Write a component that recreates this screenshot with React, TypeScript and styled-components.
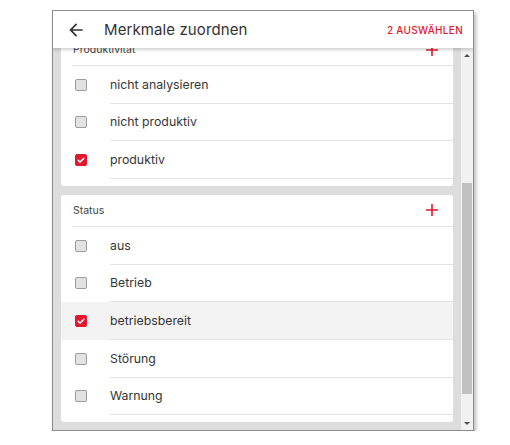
import React, { useLayoutEffect, useRef } from "react";
import styled, { createGlobalStyle } from "styled-components";

const Global = createGlobalStyle`
  html, body { margin: 0; padding: 0; background: #ffffff; }
  body { font-family: "Inter", "Liberation Sans", sans-serif; -webkit-font-smoothing: antialiased; }
  * { box-sizing: border-box; }
`;

const RED = "#e5172f";

const Page = styled.div`
  padding: 10px 0 0 52px;
`;

const Frame = styled.div`
  width: 422px;
  height: 421px;
  border: 1px solid #8d8d8d;
  background: #ffffff;
  box-shadow: 2px 3px 4px rgba(0, 0, 0, 0.28);
  display: flex;
  flex-direction: column;
  overflow: hidden;
`;

const Header = styled.header`
  position: relative;
  z-index: 2;
  height: 37px;
  flex: none;
  display: flex;
  align-items: center;
  padding: 0 10px 0 12px;
  background: #ffffff;
  box-shadow: 0 2px 3px rgba(0, 0, 0, 0.18);
`;

const BackButton = styled.button`
  border: 0;
  background: none;
  padding: 0;
  width: 22px;
  height: 22px;
  display: flex;
  align-items: center;
  justify-content: center;
  color: #333333;
  cursor: pointer;
`;

const Title = styled.h1`
  margin: 0 0 0 17px;
  font-size: 15px;
  font-weight: 400;
  color: #333333;
  flex: 1;
  letter-spacing: 0.1px;
`;

const Action = styled.button`
  border: 0;
  background: none;
  padding: 0;
  color: ${RED};
  font-family: inherit;
  font-size: 10px;
  font-weight: 500;
  letter-spacing: 0.3px;
  text-transform: uppercase;
  cursor: pointer;
`;

const Body = styled.div`
  flex: 1;
  min-height: 0;
  display: flex;
  background: #dddddd;
`;

const Scroller = styled.div`
  flex: 1;
  min-width: 0;
  overflow: hidden;
`;

const List = styled.div`
  padding: 8px 8px 40px 8px;
  display: flex;
  flex-direction: column;
  gap: 9px;
`;

const Card = styled.section`
  background: #ffffff;
  border-radius: 3px;
  padding-bottom: 7px;
  overflow: hidden;
`;

const CardHeader = styled.div`
  height: 32px;
  margin-left: 11px;
  padding: 0 11px 0 1px;
  display: flex;
  align-items: center;
  border-bottom: 1px solid #e4e4e4;
`;

const CardTitle = styled.span`
  flex: 1;
  font-size: 10.5px;
  color: #444444;
`;

const AddButton = styled.button`
  border: 0;
  background: none;
  padding: 0;
  width: 20px;
  height: 20px;
  display: flex;
  align-items: center;
  justify-content: center;
  color: ${RED};
  cursor: pointer;
`;

const Row = styled.label<{ $active?: boolean }>`
  height: 37.66px;
  display: flex;
  align-items: center;
  padding-left: 14px;
  background: ${(p) => (p.$active ? "#f3f3f3" : "transparent")};
  cursor: pointer;
`;

const Box = styled.span<{ $checked?: boolean }>`
  width: 12px;
  height: 12px;
  flex: none;
  border-radius: 2px;
  border: 1px solid ${(p) => (p.$checked ? RED : "#9c9c9c")};
  background: ${(p) => (p.$checked ? RED : "#e2e2e2")};
  display: flex;
  align-items: center;
  justify-content: center;
`;

const LabelCell = styled.span`
  flex: 1;
  align-self: stretch;
  margin-left: 23px;
  display: flex;
  align-items: center;
  border-bottom: 1px solid #e4e4e4;
  font-size: 12.3px;
  color: #353535;
`;

const ScrollBar = styled.div`
  width: 12px;
  flex: none;
  background: #f1f1f1;
  display: flex;
  flex-direction: column;
  align-items: center;
`;

const Arrow = styled.div<{ $down?: boolean }>`
  height: 14px;
  width: 100%;
  flex: none;
  display: flex;
  align-items: center;
  justify-content: center;
  &::after {
    content: "";
    width: 0;
    height: 0;
    border-left: 3.5px solid transparent;
    border-right: 3.5px solid transparent;
    ${(p) =>
      p.$down ? "border-top: 3.5px solid #505050;" : "border-bottom: 3.5px solid #505050;"}
  }
`;

const Track = styled.div`
  flex: 1;
  width: 100%;
  padding: 0 1px;
`;

const Thumb = styled.div<{ $top: number; $height: number }>`
  margin-top: ${(p) => p.$top}px;
  height: ${(p) => p.$height}px;
  background: #c1c1c1;
`;

const ArrowLeftIcon = () => (
  <svg width="20" height="20" viewBox="0 0 24 24" fill="currentColor">
    <path d="M20 11H7.83l5.59-5.59L12 4l-8 8 8 8 1.41-1.41L7.83 13H20v-2z" />
  </svg>
);

const PlusIcon = () => (
  <svg width="14" height="14" viewBox="0 0 14 14" fill="none" stroke="currentColor" strokeWidth="1.6">
    <path d="M7 1v12M1 7h12" />
  </svg>
);

const CheckIcon = () => (
  <svg width="10" height="10" viewBox="0 0 10 10" fill="none" stroke="#ffffff" strokeWidth="1.5" strokeLinecap="round" strokeLinejoin="round">
    <path d="M2.2 5.3 4.1 7.1 7.9 3.2" />
  </svg>
);

type Item = { label: string; checked?: boolean; active?: boolean };
type Group = { title: string; items: Item[] };

const groups: Group[] = [
  {
    title: "Produktivität",
    items: [
      { label: "nicht analysieren" },
      { label: "nicht produktiv" },
      { label: "produktiv", checked: true },
    ],
  },
  {
    title: "Status",
    items: [
      { label: "aus" },
      { label: "Betrieb" },
      { label: "betriebsbereit", checked: true, active: true },
      { label: "Störung" },
      { label: "Warnung" },
    ],
  },
];

export default function App() {
  const scrollRef = useRef<HTMLDivElement>(null);
  useLayoutEffect(() => {
    if (scrollRef.current) scrollRef.current.scrollTop = 22;
  }, []);

  return (
    <>
      <Global />
      <Page>
        <Frame>
          <Header>
            <BackButton aria-label="Zurück">
              <ArrowLeftIcon />
            </BackButton>
            <Title>Merkmale zuordnen</Title>
            <Action>2 Auswählen</Action>
          </Header>
          <Body>
            <Scroller ref={scrollRef}>
              <List>
                {groups.map((g) => (
                  <Card key={g.title}>
                    <CardHeader>
                      <CardTitle>{g.title}</CardTitle>
                      <AddButton aria-label="Hinzufügen">
                        <PlusIcon />
                      </AddButton>
                    </CardHeader>
                    {g.items.map((it) => (
                      <Row key={it.label} $active={it.active}>
                        <Box $checked={it.checked}>{it.checked && <CheckIcon />}</Box>
                        <LabelCell>{it.label}</LabelCell>
                      </Row>
                    ))}
                  </Card>
                ))}
              </List>
            </Scroller>
            <ScrollBar>
              <Arrow />
              <Track>
                <Thumb $top={121} $height={211} />
              </Track>
              <Arrow $down />
            </ScrollBar>
          </Body>
        </Frame>
      </Page>
    </>
  );
}
